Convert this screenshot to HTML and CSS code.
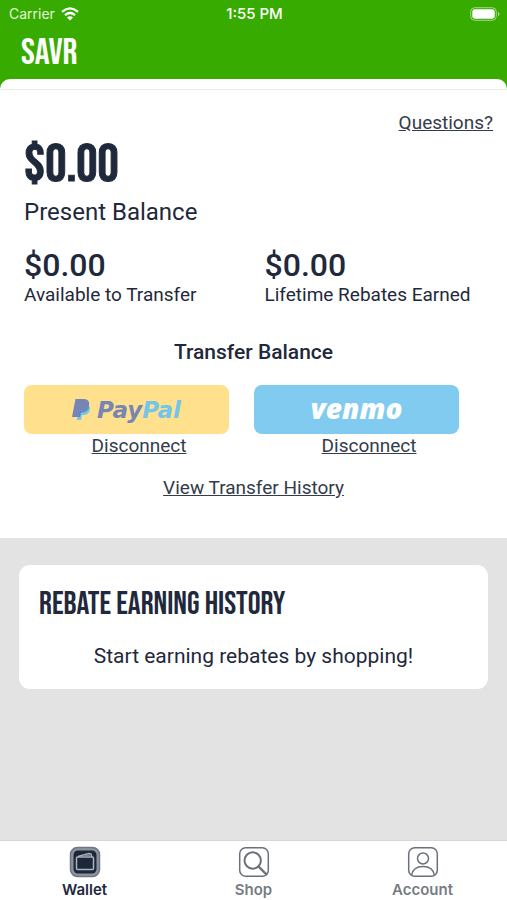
FILE: index.html
```html
<!DOCTYPE html>
<html lang="en">
<head>
<meta charset="utf-8">
<meta name="viewport" content="width=device-width, initial-scale=1">
<title>SAVR Wallet</title>
<link rel="stylesheet" href="styles.css">
</head>
<body>
<header class="top">
  <div class="status">
    <span class="carrier">Carrier
      <svg class="wifi" viewBox="0 0 18 14" aria-hidden="true"><g fill="none" stroke="#fff" stroke-width="2.3"><path d="M1 4.8Q9-2 17 4.8"/><path d="M4 8.2Q9 3.9 14 8.2"/></g><path d="M9 13.5 6 10.4Q9 8 12 10.4Z" fill="#fff"/></svg>
    </span>
    <span class="time">1:55 PM</span>
    <svg class="battery" viewBox="0 0 30 14" aria-hidden="true"><rect x=".7" y=".7" width="25.6" height="12.6" rx="4" fill="none" stroke="#a4d98a" stroke-width="1"/><rect x="2.3" y="2.3" width="22.4" height="9.4" rx="2.4" fill="#fff"/><path d="M28 4.5q3 2.5 0 5z" fill="#a4d98a"/></svg>
  </div>
  <h1 class="brand">SAVR</h1>
</header>
<main class="content">
  <div class="cap"></div>
  <section class="wallet">
    <a class="questions" href="#questions">Questions?</a>
    <p class="present">$0.00</p>
    <p class="present-label">Present Balance</p>
    <div class="pair">
      <div><p class="amount">$0.00</p><p class="label">Available to Transfer</p></div>
      <div><p class="amount">$0.00</p><p class="label">Lifetime Rebates Earned</p></div>
    </div>
    <h2 class="transfer">Transfer Balance</h2>
    <div class="services">
      <div class="service">
        <button class="pay paypal" type="button">
          <svg class="pp" viewBox="0 0 19 21" aria-hidden="true"><path d="M7 5h8q4 2 2.500 7-1.500 4-6.500 4h-1l-1 5H5z" fill="#73c5ea"/><path d="M3.500 0h8.500q6 .5 5 6-1 5.500-7 5.500H7.500L6 18H0z" fill="#7785b5"/><path d="M7.500 11.500H10q6 0 7-5.500.5 6-6.500 7.500H9L8 18H6z" fill="#5b83bd"/></svg>
          <span class="pp-name">Pay<span class="pal">Pal</span></span>
        </button>
        <a class="disconnect" href="#disconnect-paypal">Disconnect</a>
      </div>
      <div class="service">
        <button class="pay venmo" type="button">venmo</button>
        <a class="disconnect" href="#disconnect-venmo">Disconnect</a>
      </div>
    </div>
    <a class="history-link" href="#history">View Transfer History</a>
  </section>
  <section class="card">
    <h2 class="card-title">REBATE EARNING HISTORY</h2>
    <p class="card-text">Start earning rebates by shopping!</p>
  </section>
</main>
<nav class="tabs">
  <a class="tab active" href="#wallet">
    <svg class="icon" viewBox="0 0 32 32" aria-hidden="true"><rect x="1.500" y="1.500" width="29" height="29" rx="7" fill="#8d949f" stroke="#6f7783" stroke-width="1.500"/><rect x="4.500" y="4.500" width="23" height="23" rx="4.500" fill="#1c2738"/><g fill="none" stroke="#aab2bd" stroke-width="1.500" stroke-linejoin="round"><rect x="7.500" y="11" width="17" height="12.500" rx="1"/><path d="m9 10.500 11-3 2 .5.800 3"/></g><path d="m13 10 7-2 1.500 2z" fill="#7d8591"/></svg>
    <span>Wallet</span>
  </a>
  <a class="tab" href="#shop">
    <svg class="icon" viewBox="0 0 32 32" aria-hidden="true"><g fill="none" stroke="#6b717c"><rect x="1.700" y="1.700" width="28.600" height="28.600" rx="6" stroke-width="1.500"/><circle cx="14.700" cy="14.500" r="8.200" stroke-width="2"/><path d="m20.500 20.500 8.500 8.500" stroke-width="2.400"/></g></svg>
    <span>Shop</span>
  </a>
  <a class="tab" href="#account">
    <svg class="icon" viewBox="0 0 32 32" aria-hidden="true"><g fill="none" stroke="#6b717c" stroke-width="1.500"><rect x="1.700" y="1.700" width="28.600" height="28.600" rx="6"/><circle cx="16" cy="12.500" r="5.500"/><path d="M4.500 29.500C5.500 23 10 20.500 16 20.500S26.500 23 27.500 29.500"/></g></svg>
    <span>Account</span>
  </a>
</nav>
</body>
</html>
```

FILE: styles.css
```css
* {
  box-sizing: border-box;
}

body {
  margin: 0;
  min-height: 100vh;
  display: flex;
  flex-direction: column;
  background: #e3e3e3;
  color: #1f293b;
  font-family: Roboto, "Liberation Sans", sans-serif;
}

h1, h2, p {
  margin: 0;
}

a {
  color: #343b4a;
}

.top {
  background: #38ab00;
  color: #fff;
}

.status {
  display: grid;
  grid-template-columns: 1fr auto 1fr;
  align-items: center;
  height: 27px;
  padding: 0 7px 0 9px;
  font-family: Inter, sans-serif;
  font-size: 14px;
}

.carrier {
  display: flex;
  align-items: center;
  gap: 6px;
  color: #e3f5d9;
}

.wifi {
  width: 18px;
  height: 14px;
}

.time {
  font-size: 15px;
  font-weight: 500;
}

.battery {
  width: 30px;
  height: 14px;
  justify-self: end;
}

.brand,
.present,
.card-title {
  font-family: "Bebas Neue", "Roboto Condensed", "Liberation Sans Narrow", "Liberation Sans", sans-serif;
  font-weight: 400;
}

.brand {
  padding: 0 21px;
  font-size: 37px;
  line-height: 52px;
}

.content {
  flex: 1;
}

.cap {
  height: 11px;
  border-bottom: 1px solid #e9eee2;
  position: relative;
  overflow: hidden;
}

.cap::before {
  content: "";
  position: absolute;
  inset: 0;
  background: #fff;
  border-radius: 12px 12px 0 0;
  box-shadow: 0 0 0 12px #38ab00;
}

.wallet {
  display: flex;
  flex-direction: column;
  padding: 21px 14px 38px 24px;
  background: #fff;
}

.questions {
  align-self: flex-end;
  font-size: 19px;
  line-height: 24px;
}

.present {
  font-size: 53px;
  line-height: 60px;
  -webkit-text-stroke: 1px currentColor;
}

.present-label {
  font-size: 24px;
  line-height: 34px;
}

.pair {
  display: grid;
  grid-template-columns: 1fr 1fr;
  column-gap: 12px;
  padding-top: 16px;
}

.amount {
  font-size: 32px;
  font-weight: 500;
  line-height: 40px;
}

.label {
  font-size: 19px;
  line-height: 20px;
}

.transfer {
  padding: 33px 10px 19px 0;
  text-align: center;
  font-size: 21px;
  font-weight: 500;
  line-height: 28px;
}

.services {
  display: grid;
  grid-template-columns: 1fr 1fr;
  gap: 25px;
  padding-right: 34px;
}

.service {
  display: flex;
  flex-direction: column;
}

.pay {
  display: flex;
  align-items: center;
  justify-content: center;
  height: 49px;
  padding: 0;
  border: 0;
  border-radius: 8px;
}

.paypal {
  gap: 6px;
  background: #ffe08c;
}

.pp {
  width: 19px;
  height: 21px;
}

.pp-name {
  color: #7785b5;
  font: italic 700 23px/28px "DejaVu Sans", sans-serif;
}

.pal {
  color: #73c5ea;
}

.venmo {
  padding-bottom: 3px;
  background: #80cbef;
  color: #fff;
  font: italic 800 28px/32px "Open Sans", sans-serif;
}

.disconnect {
  padding-left: 25px;
  text-align: center;
  font-size: 19px;
  line-height: 24px;
}

.history-link {
  align-self: center;
  margin: 18px 10px 0 0;
  font-size: 19px;
  line-height: 24px;
}

.card {
  margin: 27px 19px;
  padding: 20px;
  background: #fff;
  border-radius: 11px;
}

.card-title {
  padding-top: 2px;
  font-size: 32px;
  line-height: 36px;
}

.card-text {
  padding-top: 20px;
  text-align: center;
  font-size: 21px;
  line-height: 26px;
}

.tabs {
  display: grid;
  grid-template-columns: repeat(3, 1fr);
  height: 60px;
  background: #fff;
  border-top: 1px solid #d6d6d6;
}

.tab {
  display: flex;
  flex-direction: column;
  align-items: center;
  padding-top: 5px;
  color: #777b84;
  font-family: Inter, sans-serif;
  font-size: 15px;
  font-weight: 600;
  line-height: 24px;
  text-decoration: none;
}

.active {
  color: #1f293b;
}

.icon {
  width: 32px;
  height: 32px;
}
```
